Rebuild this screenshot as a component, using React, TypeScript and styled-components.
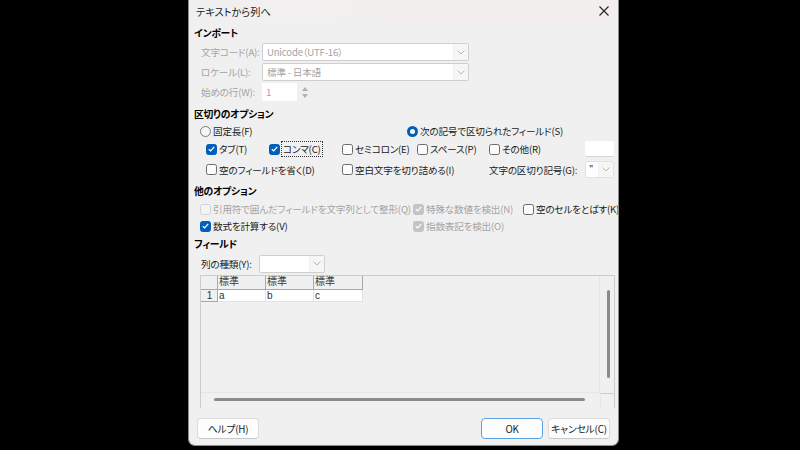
import React from "react";
import styled, { createGlobalStyle, css } from "styled-components";

const Global = createGlobalStyle`
  html, body { margin: 0; padding: 0; background: #000; }
  body { font-family: "Noto Sans CJK JP", "Noto Sans", sans-serif; }
  * { box-sizing: border-box; }
`;

const Page = styled.div`
  width: 800px;
  height: 450px;
  background: #000;
  display: flex;
  padding-left: 188px;
  overflow: hidden;
`;

const Dialog = styled.div`
  width: 431px;
  height: 446px;
  background: #f0f0f0;
  border: 1px solid #8c8c8c;
  border-top: none;
  border-radius: 0 0 7px 7px;
  display: flex;
  flex-direction: column;
  font-size: 9.6px;
  letter-spacing: -0.2px;
  font-feature-settings: "palt";
  color: #1a1a1a;
  overflow: hidden;
`;

const TitleBar = styled.div`
  height: 22px;
  flex: none;
  display: flex;
  align-items: center;
  justify-content: space-between;
  padding: 0 9px 0 7px;
  background: linear-gradient(90deg, #f0f0f0 0%, #f3efef 45%, #f4efef 100%);
  font-size: 10.2px;
  letter-spacing: 0;
  color: #1a1a1a;
`;

const Row = styled.div<{ $h: number; $mt?: number; $pl?: number }>`
  height: ${(p) => p.$h}px;
  margin-top: ${(p) => p.$mt ?? 0}px;
  padding-left: ${(p) => p.$pl ?? 0}px;
  flex: none;
  display: flex;
  align-items: center;
  white-space: nowrap;
`;

const Heading = styled.div`
  font-weight: 700;
  font-size: 9.8px;
  color: #000;
`;

const Label = styled.div<{ $w?: number; $disabled?: boolean }>`
  width: ${(p) => (p.$w ? `${p.$w}px` : "auto")};
  flex: none;
  color: ${(p) => (p.$disabled ? "#a3a3a3" : "#1a1a1a")};
`;

const Combo = styled.div<{ $w: number; $disabled?: boolean }>`
  width: ${(p) => p.$w}px;
  height: 18px;
  flex: none;
  display: flex;
  background: #fff;
  border: 1px solid #cfcfcf;
  border-radius: 2px;
  color: ${(p) => (p.$disabled ? "#a3a3a3" : "#1a1a1a")};
`;

const ComboText = styled.div`
  flex: 1;
  display: flex;
  align-items: center;
  padding-left: 4px;
  overflow: hidden;
`;

const ComboBtn = styled.div`
  width: 15px;
  flex: none;
  display: flex;
  align-items: center;
  justify-content: center;
  background: #f6f6f6;
  border-left: 1px solid #f0f0f0;
`;

const SpinBox = styled.div`
  width: 35px;
  height: 18px;
  flex: none;
  background: #fff;
  display: flex;
  align-items: center;
  padding-left: 4px;
  color: #a3a3a3;
`;

const Spin = styled.div`
  width: 12px;
  height: 18px;
  margin-left: 2px;
  display: flex;
  flex-direction: column;
  align-items: center;
  justify-content: space-around;
  padding: 2px 0;
`;

const Option = styled.div<{ $w?: number }>`
  width: ${(p) => (p.$w ? `${p.$w}px` : "auto")};
  flex: none;
  display: flex;
  align-items: center;
  gap: 2px;
  height: 16px;
`;

const Box = styled.span<{ $checked?: boolean; $disabled?: boolean }>`
  width: 11px;
  height: 11px;
  flex: none;
  border-radius: 2.5px;
  display: flex;
  align-items: center;
  justify-content: center;
  ${(p) =>
    p.$checked
      ? css`
          background: ${p.$disabled ? "#c4c4c4" : "#005fb8"};
          border: 1px solid ${p.$disabled ? "#c4c4c4" : "#005fb8"};
        `
      : css`
          background: ${p.$disabled ? "#f3f3f3" : "#fbfbfb"};
          border: 1px solid ${p.$disabled ? "#d2d2d2" : "#6a6a6a"};
        `}
`;

const Radio = styled.span<{ $checked?: boolean }>`
  width: 11px;
  height: 11px;
  flex: none;
  border-radius: 50%;
  display: flex;
  align-items: center;
  justify-content: center;
  ${(p) =>
    p.$checked
      ? css`
          background: #005fb8;
          &::after {
            content: "";
            width: 5px;
            height: 5px;
            border-radius: 50%;
            background: #fff;
          }
        `
      : css`
          background: #f6f6f6;
          border: 1px solid #7a7a7a;
        `}
`;

const Focus = styled.span`
  outline: 1px dotted #333;
  outline-offset: 0px;
  padding: 0 1px;
  line-height: 14px;
`;

const SmallInput = styled.div`
  width: 29px;
  height: 16px;
  flex: none;
  background: #fff;
  border-bottom: 1px solid #d6d6d6;
  border-radius: 2px;
`;

const QuoteCombo = styled.div`
  width: 29px;
  height: 17px;
  flex: none;
  display: flex;
  background: #fff;
  border: 1px solid #e2e2e2;
  border-radius: 2px;
`;

const QuoteText = styled.div`
  flex: 1;
  padding-left: 3px;
  font-size: 9px;
  line-height: 14px;
`;

const Grid = styled.div`
  margin-left: 11px;
  width: 415px;
  height: 133px;
  flex: none;
  border: 1px solid #cdcdcd;
  border-bottom: none;
  display: grid;
  grid-template-columns: 399px 15px;
  grid-template-rows: 117px 15px;
`;

const Viewport = styled.div`
  background: #f0f0f0;
  border-right: 1px solid #e6e6e6;
  border-bottom: 1px solid #e6e6e6;
  display: flex;
  flex-direction: column;
  font-family: "Liberation Sans", "Noto Sans CJK JP", sans-serif;
  font-feature-settings: normal;
  letter-spacing: 0;
  font-size: 10px;
  color: #333;
`;

const GridRow = styled.div<{ $h: number }>`
  display: flex;
  height: ${(p) => p.$h}px;
`;

const Cell = styled.div<{ $w: number; $head?: boolean; $corner?: boolean }>`
  width: ${(p) => p.$w}px;
  flex: none;
  line-height: 12px;
  padding-left: 1px;
  overflow: hidden;
  border-right: 1px solid ${(p) => (p.$head ? "#a8a8a8" : "#e2e2e2")};
  border-bottom: 1px solid ${(p) => (p.$head ? "#a8a8a8" : "#e2e2e2")};
  background: ${(p) => (p.$head ? "#f0f0f0" : "#fff")};
  text-align: ${(p) => (p.$corner ? "center" : "left")};
`;

const VTrack = styled.div`
  display: flex;
  justify-content: center;
  padding-top: 14px;
  padding-left: 1px;
`;

const VThumb = styled.div`
  width: 3px;
  height: 88px;
  border-radius: 2px;
  background: #8a8a8a;
`;

const HTrack = styled.div`
  display: flex;
  align-items: center;
  padding-left: 13px;
  padding-bottom: 3px;
`;

const HThumb = styled.div`
  width: 371px;
  height: 3px;
  border-radius: 2px;
  background: #8a8a8a;
`;

const CornerBox = styled.div`
  border-top: 1px solid #cdcdcd;
  border-left: 1px solid #e6e6e6;
`;

const Buttons = styled.div`
  margin-top: 10px;
  height: 21px;
  flex: none;
  display: flex;
  justify-content: space-between;
  padding: 0 8px 0 8px;
`;

const BtnGroup = styled.div`
  display: flex;
  gap: 5px;
`;

const Button = styled.div<{ $primary?: boolean }>`
  width: 62px;
  height: 21px;
  display: flex;
  align-items: center;
  justify-content: center;
  background: #fdfdfd;
  border: 1px solid ${(p) => (p.$primary ? "#5fa2e4" : "#dcdcdc")};
  border-bottom-color: ${(p) => (p.$primary ? "#5fa2e4" : "#c8c8c8")};
  border-radius: 4px;
  color: #1a1a1a;
  font-size: 9.8px;
`;

const Chevron = () => (
  <svg width="8" height="5" viewBox="0 0 8 5">
    <path d="M0.5 0.5 L4 4 L7.5 0.5" fill="none" stroke="#b5b5b5" strokeWidth="1" />
  </svg>
);

const Check = () => (
  <svg width="7" height="6" viewBox="0 0 7 6">
    <path d="M0.8 3.2 L2.7 5 L6.2 0.9" fill="none" stroke="#fff" strokeWidth="1.2" />
  </svg>
);

const CheckBox = ({ checked, disabled }: { checked?: boolean; disabled?: boolean }) => (
  <Box $checked={checked} $disabled={disabled}>
    {checked && <Check />}
  </Box>
);

export default function App() {
  return (
    <>
      <Global />
      <Page>
        <Dialog>
          <TitleBar>
            <span>テキストから列へ</span>
            <svg width="10" height="10" viewBox="0 0 10 10">
              <path d="M0.5 0.5 L9.5 9.5 M9.5 0.5 L0.5 9.5" stroke="#222" strokeWidth="1.1" />
            </svg>
          </TitleBar>

          <Row $h={18} $mt={2} $pl={5}>
            <Heading>インポート</Heading>
          </Row>
          <Row $h={18} $mt={1} $pl={12}>
            <Label $w={61} $disabled>文字コード(A):</Label>
            <Combo $w={207} $disabled>
              <ComboText>Unicode（UTF-16）</ComboText>
              <ComboBtn><Chevron /></ComboBtn>
            </Combo>
          </Row>
          <Row $h={18} $mt={2} $pl={12}>
            <Label $w={61} $disabled>ロケール(L):</Label>
            <Combo $w={207} $disabled>
              <ComboText>標準 - 日本語</ComboText>
              <ComboBtn><Chevron /></ComboBtn>
            </Combo>
          </Row>
          <Row $h={18} $mt={2} $pl={12}>
            <Label $w={61} $disabled>始めの行(W):</Label>
            <SpinBox>1</SpinBox>
            <Spin>
              <svg width="6" height="4" viewBox="0 0 6 4"><path d="M0 4 L3 0 L6 4 Z" fill="#b0b0b0" /></svg>
              <svg width="6" height="4" viewBox="0 0 6 4"><path d="M0 0 L3 4 L6 0 Z" fill="#b0b0b0" /></svg>
            </Spin>
          </Row>

          <Row $h={16} $mt={5} $pl={5}>
            <Heading>区切りのオプション</Heading>
          </Row>
          <Row $h={18} $pl={11}>
            <Option $w={207}>
              <Radio />
              <span>固定長(F)</span>
            </Option>
            <Option>
              <Radio $checked />
              <span>次の記号で区切られたフィールド(S)</span>
            </Option>
          </Row>
          <Row $h={16} $mt={1} $pl={17}>
            <Option $w={63}>
              <CheckBox checked />
              <span>タブ(T)</span>
            </Option>
            <Option $w={73}>
              <CheckBox checked />
              <Focus>コンマ(C)</Focus>
            </Option>
            <Option $w={75}>
              <CheckBox />
              <span>セミコロン(E)</span>
            </Option>
            <Option $w={72}>
              <CheckBox />
              <span>スペース(P)</span>
            </Option>
            <Option $w={96}>
              <CheckBox />
              <span>その他(R)</span>
            </Option>
            <SmallInput />
          </Row>
          <Row $h={17} $mt={4} $pl={17}>
            <Option $w={136}>
              <CheckBox />
              <span>空のフィールドを省く(D)</span>
            </Option>
            <Option $w={147}>
              <CheckBox />
              <span>空白文字を切り詰める(I)</span>
            </Option>
            <Label $w={96}>文字の区切り記号(G):</Label>
            <QuoteCombo>
              <QuoteText>"</QuoteText>
              <ComboBtn><Chevron /></ComboBtn>
            </QuoteCombo>
          </Row>

          <Row $h={16} $mt={5} $pl={5}>
            <Heading>他のオプション</Heading>
          </Row>
          <Row $h={16} $mt={2} $pl={11}>
            <Option $w={213}>
              <CheckBox disabled />
              <Label $disabled>引用符で囲んだフィールドを文字列として整形(Q)</Label>
            </Option>
            <Option $w={110}>
              <CheckBox checked disabled />
              <Label $disabled>特殊な数値を検出(N)</Label>
            </Option>
            <Option>
              <CheckBox />
              <span>空のセルをとばす(K)</span>
            </Option>
          </Row>
          <Row $h={16} $mt={1} $pl={11}>
            <Option $w={213}>
              <CheckBox checked />
              <span>数式を計算する(V)</span>
            </Option>
            <Option>
              <CheckBox checked disabled />
              <Label $disabled>指数表記を検出(O)</Label>
            </Option>
          </Row>

          <Row $h={16} $mt={2} $pl={5}>
            <Heading>フィールド</Heading>
          </Row>
          <Row $h={17} $mt={3} $pl={12}>
            <Label $w={58}>列の種類(Y):</Label>
            <Combo $w={66}>
              <ComboText />
              <ComboBtn><Chevron /></ComboBtn>
            </Combo>
          </Row>

          <Row $h={133} $mt={3}>
            <Grid>
              <Viewport>
                <GridRow $h={14}>
                  <Cell $w={17} $head />
                  <Cell $w={48} $head>標準</Cell>
                  <Cell $w={48} $head>標準</Cell>
                  <Cell $w={49} $head>標準</Cell>
                </GridRow>
                <GridRow $h={12}>
                  <Cell $w={17} $head $corner>1</Cell>
                  <Cell $w={48}>a</Cell>
                  <Cell $w={48}>b</Cell>
                  <Cell $w={49}>c</Cell>
                </GridRow>
              </Viewport>
              <VTrack>
                <VThumb />
              </VTrack>
              <HTrack>
                <HThumb />
              </HTrack>
              <CornerBox />
            </Grid>
          </Row>

          <Buttons>
            <Button>ヘルプ(H)</Button>
            <BtnGroup>
              <Button $primary>OK</Button>
              <Button>キャンセル(C)</Button>
            </BtnGroup>
          </Buttons>
        </Dialog>
      </Page>
    </>
  );
}
